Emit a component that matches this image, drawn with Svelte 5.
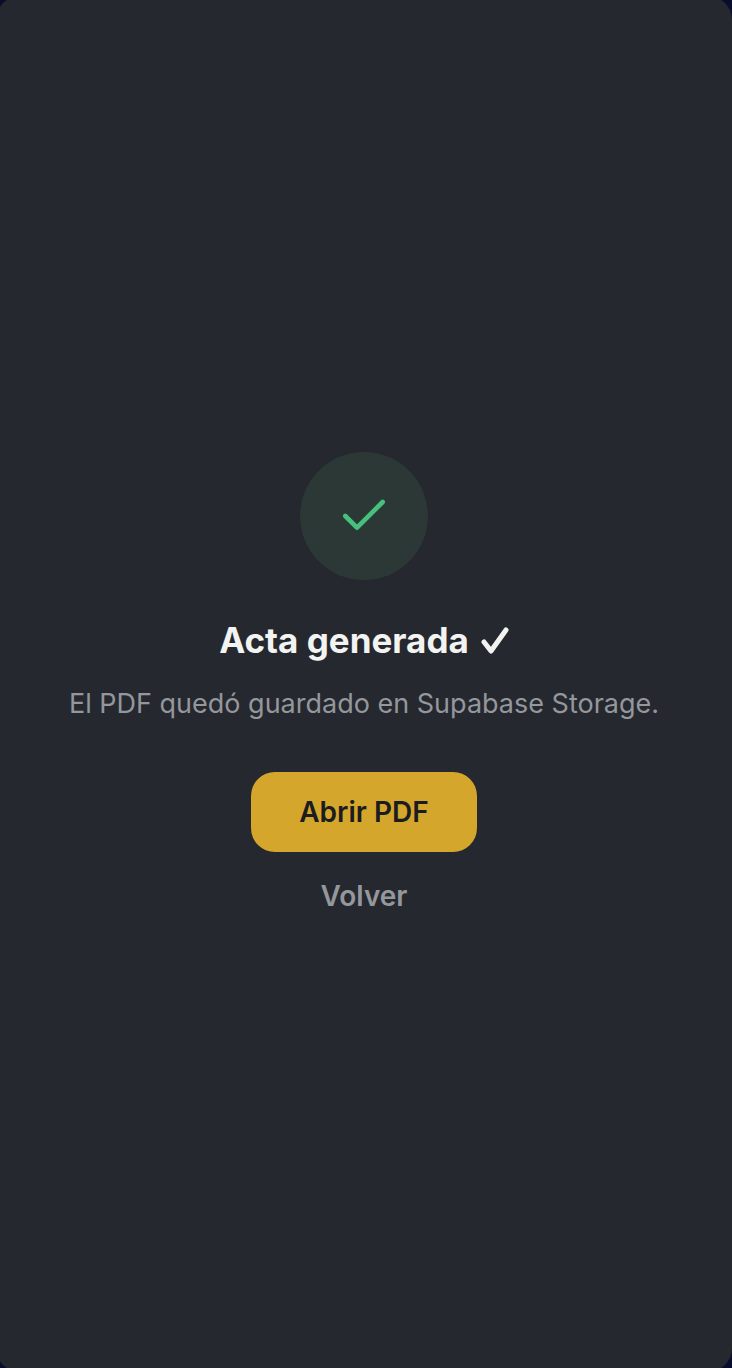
<script lang="ts">
	let title = 'Acta generada';
	let message = 'El PDF quedó guardado en Supabase Storage.';
</script>

<main class="screen">
	<section class="panel">
		<div class="badge">
			<svg viewBox="0 0 24 24" fill="none" aria-hidden="true">
				<path d="M20 6 9 17l-5-5" />
			</svg>
		</div>
		<h1>
			{title}
			<svg viewBox="0 0 28 28" fill="none" aria-hidden="true">
				<path d="M3 16l7 9L25 4" />
			</svg>
		</h1>
		<p>{message}</p>
		<button class="primary" type="button">Abrir PDF</button>
		<button class="back" type="button">Volver</button>
	</section>
</main>

<style>
	:global(body) {
		background: #080d2b;
	}

	.screen {
		display: flex;
		min-height: 100vh;
		overflow: hidden;
		font-family: Inter, 'Liberation Sans', sans-serif;
	}

	.panel {
		flex: 1;
		display: flex;
		flex-direction: column;
		align-items: center;
		justify-content: center;
		margin: -4px 0 -4px -4px;
		border-radius: 24px;
		background: #25282f;
		text-align: center;
	}

	svg {
		stroke-linecap: round;
		stroke-linejoin: round;
	}

	.badge {
		display: grid;
		place-items: center;
		width: 128px;
		height: 128px;
		margin-bottom: 32px;
		border-radius: 50%;
		background: #2b3835;
	}

	.badge svg {
		width: 56px;
		height: 56px;
		stroke: #45c17c;
		stroke-width: 2;
	}

	h1 {
		display: flex;
		align-items: center;
		gap: 12px;
		margin: 0 0 16px;
		color: #f3f3f2;
		font-size: 35px;
		font-weight: 700;
		line-height: 56px;
	}

	h1 svg {
		width: 28px;
		height: 28px;
		stroke: currentColor;
		stroke-width: 5;
	}

	p {
		margin: 0 0 48px;
		color: #94979b;
		font-size: 27px;
		line-height: 40px;
	}

	button {
		border: 0;
		font-family: inherit;
		font-size: 28px;
		font-weight: 600;
		line-height: 40px;
		cursor: pointer;
	}

	.primary {
		margin-bottom: 24px;
		padding: 20px 48px;
		border-radius: 24px;
		background: #d4a72c;
		color: #1b1c1f;
	}

	.back {
		padding: 0;
		background: none;
		color: #94979b;
	}
</style>
